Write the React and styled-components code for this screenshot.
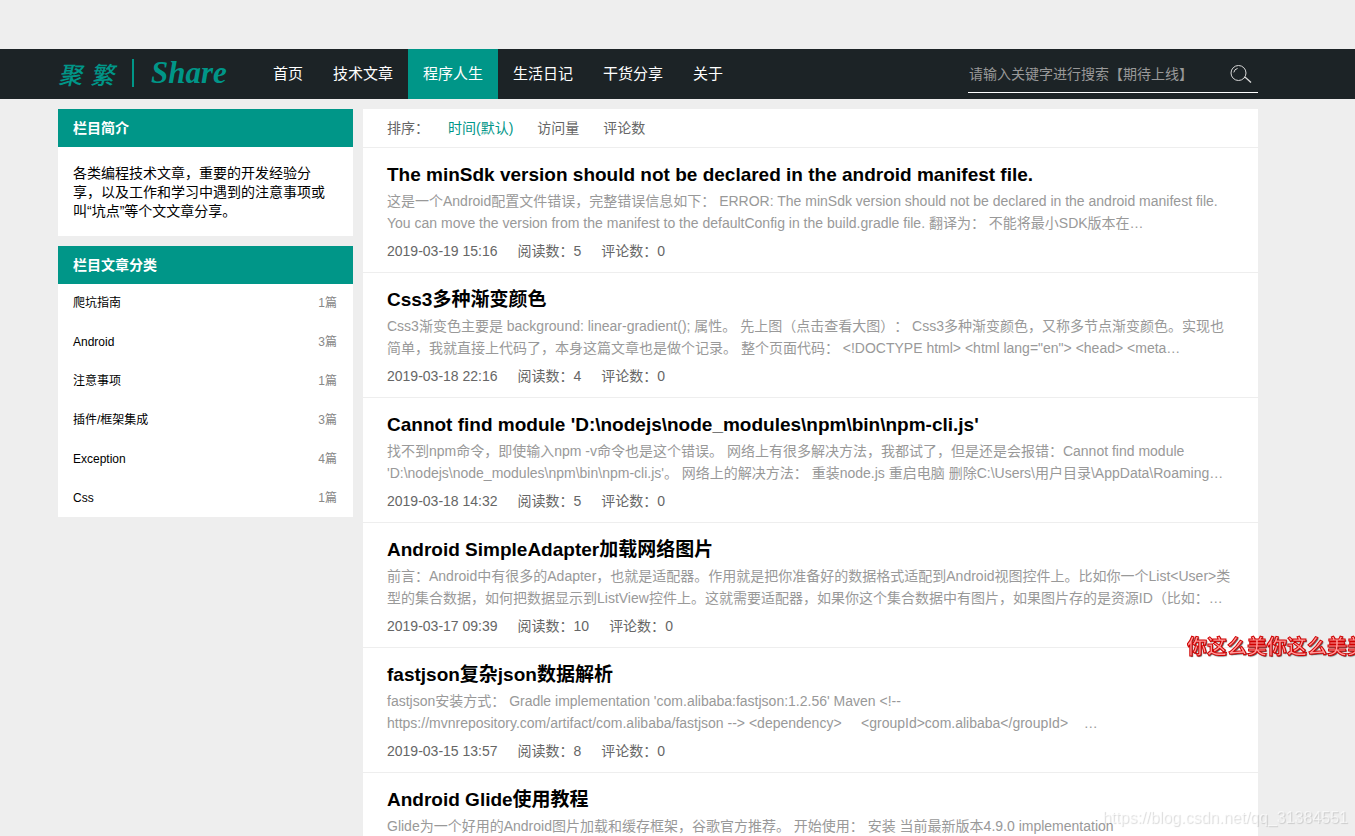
import { createGlobalStyle, styled } from "styled-components";

const navItems = [
  "首页",
  "技术文章",
  "程序人生",
  "生活日记",
  "干货分享",
  "关于",
];

const sorts = ["时间(默认)", "访问量", "评论数"];

const categories = [
  { name: "爬坑指南", count: 1 },
  { name: "Android", count: 3 },
  { name: "注意事项", count: 1 },
  { name: "插件/框架集成", count: 3 },
  { name: "Exception", count: 4 },
  { name: "Css", count: 1 },
];

const articles = [
  {
    title:
      "The minSdk version should not be declared in the android manifest file.",
    summary:
      "这是一个Android配置文件错误，完整错误信息如下： ERROR: The minSdk version should not be declared in the android manifest file.\nYou can move the version from the manifest to the defaultConfig in the build.gradle file. 翻译为： 不能将最小SDK版本在…",
    date: "2019-03-19 15:16",
    reads: 5,
    comments: 0,
  },
  {
    title: "Css3多种渐变颜色",
    summary:
      'Css3渐变色主要是 background: linear-gradient(); 属性。 先上图（点击查看大图）： Css3多种渐变颜色，又称多节点渐变颜色。实现也\n简单，我就直接上代码了，本身这篇文章也是做个记录。 整个页面代码： <!DOCTYPE html> <html lang="en"> <head> <meta…',
    date: "2019-03-18 22:16",
    reads: 4,
    comments: 0,
  },
  {
    title: "Cannot find module 'D:\\nodejs\\node_modules\\npm\\bin\\npm-cli.js'",
    summary:
      "找不到npm命令，即使输入npm -v命令也是这个错误。 网络上有很多解决方法，我都试了，但是还是会报错：Cannot find module\n'D:\\nodejs\\node_modules\\npm\\bin\\npm-cli.js'。 网络上的解决方法： 重装node.js 重启电脑 删除C:\\Users\\用户目录\\AppData\\Roaming…",
    date: "2019-03-18 14:32",
    reads: 5,
    comments: 0,
  },
  {
    title: "Android SimpleAdapter加载网络图片",
    summary:
      "前言：Android中有很多的Adapter，也就是适配器。作用就是把你准备好的数据格式适配到Android视图控件上。比如你一个List<User>类\n型的集合数据，如何把数据显示到ListView控件上。这就需要适配器，如果你这个集合数据中有图片，如果图片存的是资源ID（比如：…",
    date: "2019-03-17 09:39",
    reads: 10,
    comments: 0,
  },
  {
    title: "fastjson复杂json数据解析",
    summary:
      "fastjson安装方式： Gradle implementation 'com.alibaba:fastjson:1.2.56' Maven <!--\nhttps://mvnrepository.com/artifact/com.alibaba/fastjson --> <dependency>     <groupId>com.alibaba</groupId>    …",
    date: "2019-03-15 13:57",
    reads: 8,
    comments: 0,
  },
  {
    title: "Android Glide使用教程",
    summary:
      "Glide为一个好用的Android图片加载和缓存框架，谷歌官方推荐。 开始使用： 安装 当前最新版本4.9.0 implementation",
  },
];

function Header() {
  return (
    <TopBar>
      <Container>
        <BarRow>
          <Logo href="#">
            <LogoChar>聚</LogoChar>
            <LogoChar>繁</LogoChar>
            <LogoLine />
            <LogoWord>Share</LogoWord>
          </Logo>
          <Nav>
            {navItems.map((item) => (
              <NavLink key={item} href="#" $active={item === "程序人生"}>
                {item}
              </NavLink>
            ))}
          </Nav>
          <SearchForm onSubmit={(e) => e.preventDefault()}>
            <SearchInput
              type="text"
              aria-label="搜索"
              placeholder="请输入关键字进行搜索【期待上线】"
            />
            <SearchButton type="submit" aria-label="搜索">
              <svg width="22" height="20" viewBox="0 0 22 20" fill="none">
                <circle cx="8.5" cy="9" r="7.5" stroke="#d8d8d8" />
                <path d="M3.8 8.4a5 5 0 0 1 3.8-4" stroke="#d8d8d8" />
                <path d="M14 13.4l1.6.2 5.4 5" stroke="#d8d8d8" strokeWidth="1.4" />
              </svg>
            </SearchButton>
          </SearchForm>
        </BarRow>
      </Container>
    </TopBar>
  );
}

function Sidebar() {
  return (
    <Side>
      <Panel>
        <PanelTitle>栏目简介</PanelTitle>
        <Intro>
          各类编程技术文章，重要的开发经验分享，以及工作和学习中遇到的注意事项或叫“坑点”等个文文章分享。
        </Intro>
      </Panel>
      <Panel>
        <PanelTitle>栏目文章分类</PanelTitle>
        <CategoryList>
          {categories.map((c) => (
            <Category key={c.name}>
              <CategoryLink href="#">{c.name}</CategoryLink>
              <Count>{c.count}篇</Count>
            </Category>
          ))}
        </CategoryList>
      </Panel>
    </Side>
  );
}

function Article({ article }) {
  return (
    <Item>
      <Title>
        <a href="#">{article.title}</a>
      </Title>
      <Summary>{article.summary}</Summary>
      {article.date && (
        <Meta>
          <span>{article.date}</span>
          <span>阅读数：{article.reads}</span>
          <span>评论数：{article.comments}</span>
        </Meta>
      )}
    </Item>
  );
}

export default function App() {
  return (
    <>
      <GlobalStyle />
      <Page>
        <Header />
        <Container>
          <Columns>
            <Sidebar />
            <Main>
              <SortBar>
                <SortLabel>排序：</SortLabel>
                {sorts.map((s, i) => (
                  <SortLink key={s} href="#" $active={i === 0}>
                    {s}
                  </SortLink>
                ))}
              </SortBar>
              {articles.map((a) => (
                <Article key={a.title} article={a} />
              ))}
            </Main>
          </Columns>
        </Container>
      </Page>
      <Barrage>你这么美你这么美美</Barrage>
      <Watermark>https://blog.csdn.net/qq_31384551</Watermark>
    </>
  );
}

const GlobalStyle = createGlobalStyle`
  * {
    box-sizing: border-box;
  }
  body {
    margin: 0;
    background: #eee;
    color: #000;
    font-family: "Liberation Sans", "Noto Sans CJK SC", sans-serif;
    font-size: 14px;
    text-spacing-trim: space-all;
  }
  a {
    color: inherit;
    text-decoration: none;
  }
`;

const Page = styled.div`
  height: 100vh;
  padding-top: 49px;
  overflow: hidden;
`;

const Container = styled.div`
  max-width: 1239px;
  margin: 0 auto;
  padding-right: 39px;
`;

const TopBar = styled.header`
  background: #1c2326;
`;

const BarRow = styled.div`
  display: flex;
  height: 50px;
`;

const Logo = styled.a`
  display: flex;
  align-items: center;
  width: 200px;
  padding-bottom: 2px;
  color: #009688;
`;

const LogoChar = styled.span`
  margin-right: 8px;
  font-size: 24px;
  font-style: italic;
  font-weight: 500;
`;

const LogoLine = styled.span`
  width: 2px;
  height: 28px;
  margin: 0 17px 0 10px;
  background: #009688;
`;

const LogoWord = styled.span`
  font-family: "Liberation Serif", serif;
  font-size: 31px;
  font-style: italic;
  font-weight: bold;
`;

const Nav = styled.nav`
  display: flex;
`;

const NavLink = styled.a`
  padding: 0 15px;
  background: ${(p) => (p.$active ? "#009688" : "transparent")};
  color: #fff;
  font-size: 15px;
  line-height: 50px;
`;

const SearchForm = styled.form`
  display: flex;
  align-items: center;
  width: 290px;
  height: 38px;
  margin: 6px 0 0 auto;
  border-bottom: 1px solid #fff;
`;

const SearchInput = styled.input`
  flex: 1;
  min-width: 0;
  padding: 0 1px;
  border: 0;
  outline: 0;
  background: transparent;
  color: #fff;
  font-family: inherit;
  font-size: 14px;
  &::placeholder {
    color: #999;
  }
`;

const SearchButton = styled.button`
  display: flex;
  padding: 0 6px;
  border: 0;
  background: transparent;
  cursor: pointer;
`;

const Columns = styled.div`
  display: grid;
  grid-template-columns: 295px 1fr;
  align-items: start;
  gap: 10px;
  margin-top: 10px;
`;

const Side = styled.aside`
  display: grid;
  gap: 10px;
`;

const Panel = styled.section`
  background: #fff;
`;

const PanelTitle = styled.h2`
  margin: 0;
  padding: 0 15px;
  background: #009688;
  color: #fff;
  font-size: 14px;
  line-height: 38px;
`;

const Intro = styled.p`
  margin: 0;
  padding: 17px 15px 15px;
  line-height: 19px;
`;

const CategoryList = styled.ul`
  display: grid;
  gap: 1px;
  margin: 0;
  padding: 0;
  list-style: none;
`;

const Category = styled.li`
  display: flex;
  justify-content: space-between;
  padding: 0 16px 0 15px;
  font-size: 12px;
  line-height: 38px;
`;

const CategoryLink = styled.a`
  color: #000;
`;

const Count = styled.span`
  color: #888;
`;

const Main = styled.main`
  min-width: 0;
  background: #fff;
`;

const SortBar = styled.div`
  display: flex;
  padding: 0 24px;
  border-bottom: 1px solid #eee;
  color: #666;
  line-height: 38px;
`;

const SortLabel = styled.span`
  margin-right: 19px;
`;

const SortLink = styled.a`
  margin-right: 24px;
  color: ${(p) => (p.$active ? "#009688" : "#666")};
`;

const Item = styled.article`
  padding: 15px 24px 11px;
  border-bottom: 1px solid #eee;
  &:last-child {
    padding-bottom: 40px;
  }
`;

const Title = styled.h3`
  margin: 0;
  font-size: 19px;
  line-height: 24px;
`;

const Summary = styled.p`
  margin: 3px 0 7px;
  color: #999;
  line-height: 22px;
  white-space: pre-wrap;
`;

const Meta = styled.div`
  display: flex;
  gap: 20px;
  color: #666;
  line-height: 20px;
`;

const Barrage = styled.div`
  position: fixed;
  top: 633px;
  right: 0;
  width: 168px;
  overflow: hidden;
  color: #ff9c9c;
  font-size: 20px;
  font-weight: bold;
  line-height: 28px;
  white-space: nowrap;
  -webkit-text-stroke: 1px #d00000;
  text-shadow: 1px 1px 1px #555;
`;

const Watermark = styled.div`
  position: fixed;
  right: 7px;
  bottom: 7px;
  color: rgba(255, 255, 255, 0.6);
  font-size: 16px;
  line-height: 22px;
  text-shadow: 1px 1px 1px rgba(0, 0, 0, 0.15);
`;
